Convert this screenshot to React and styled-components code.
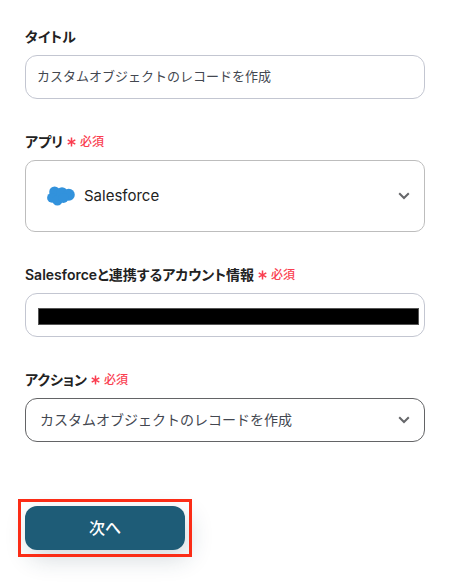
import React, { useState } from "react";
import styled, { createGlobalStyle } from "styled-components";

const GlobalStyle = createGlobalStyle`
  * {
    box-sizing: border-box;
  }

  body {
    margin: 0;
    background: #fff;
    color: #222;
    font-family: Inter, "Noto Sans CJK JP", sans-serif;
    font-size: 14px;
    line-height: 20px;
  }

  input, select, button {
    font: inherit;
    color: inherit;
  }
`;

const StyledForm = styled.form`
  display: flex;
  flex-direction: column;
  gap: 33px;
  padding: 27px 40px 36px 25px;
`;

const Field = styled.div`
  display: flex;
  flex-direction: column;
  gap: 8px;
`;

const StyledLabel = styled.label`
  display: flex;
  align-items: center;
  gap: 4px;
  font-weight: 600;
  font-feature-settings: "palt";
`;

const Required = styled.span`
  display: flex;
  align-items: center;
  gap: 4px;
  color: #fa3e50;
  font-size: 12px;
  font-weight: 500;
`;

const Box = styled.div`
  position: relative;
  display: flex;
  align-items: center;
  height: ${(props) => (props.$tall ? "72px" : "44px")};
  border: 1px solid ${(props) => props.$border || "#c3c6d1"};
  border-radius: ${(props) => (props.$tall ? "10px" : "12px")};
`;

const TextInput = styled.input`
  width: 100%;
  height: 100%;
  padding: 0 11px 4px;
  border: 0;
  outline: 0;
  background: transparent;
  color: #434750;
  font-size: 13px;
`;

// account name is blacked out
const MaskedInput = styled.input`
  flex: 1;
  min-width: 0;
  height: 17px;
  margin: 2px 5px 0 12px;
  padding: 0;
  border: 1px solid #555;
  outline: 0;
  background: #000;
`;

const StyledSelect = styled.select`
  appearance: none;
  width: 100%;
  height: 100%;
  padding: 0 40px 0 ${(props) => (props.$icon ? "58px" : "14px")};
  border: 0;
  outline: 0;
  background: transparent;
  color: ${(props) => (props.$icon ? "#222" : "#434750")};
  font-size: ${(props) => (props.$icon ? "15px" : "14px")};
`;

const ChevronIcon = styled.svg`
  position: absolute;
  right: 14px;
  width: 12px;
  height: 8px;
  pointer-events: none;
`;

const CloudIcon = styled.svg`
  position: absolute;
  left: 21px;
  width: 28px;
  height: 20px;
  pointer-events: none;
`;

const Actions = styled.div`
  display: flex;
  margin-top: 31px;
`;

const SubmitButton = styled.button`
  position: relative;
  width: 160px;
  height: 44px;
  border: 0;
  border-radius: 12px;
  background: #1e5c77;
  box-shadow: 4px 8px 24px rgba(30, 60, 80, 0.2);
  color: #fff;
  font-size: 16px;
  font-weight: 500;
  cursor: pointer;

  /* highlight frame */
  &:after {
    content: "";
    position: absolute;
    inset: -7px;
    border: 3px solid #fb2c16;
  }
`;

const Chevron = () => (
  <ChevronIcon viewBox="0 0 12 8" aria-hidden="true">
    <path d="M1.2 1.2 6 6l4.8-4.8" fill="none" stroke="#66676a" strokeWidth="2" />
  </ChevronIcon>
);

const Salesforce = () => (
  <CloudIcon viewBox="0 0 28 20" fill="#3292dc" aria-hidden="true">
    <circle cx="7.6" cy="5.9" r="5.4" />
    <circle cx="15" cy="6.8" r="5.6" />
    <circle cx="21.8" cy="8.8" r="6" />
    <circle cx="5" cy="11.8" r="4.9" />
    <circle cx="10.4" cy="14.3" r="5.2" />
    <circle cx="16.4" cy="12" r="5" />
  </CloudIcon>
);

const FieldLabel = ({ children, required, ...props }) => (
  <StyledLabel {...props}>
    {children}
    {required ? (
      <Required>
        <svg width="9" height="10" viewBox="0 0 9 10" aria-hidden="true">
          <path d="M4.5.5v9M.7 2.8l7.6 4.4M8.3 2.8.7 7.2" stroke="currentColor" strokeWidth="1.5" />
        </svg>
        必須
      </Required>
    ) : null}
  </StyledLabel>
);

const App = () => {
  const [title, setTitle] = useState("カスタムオブジェクトのレコードを作成");

  return (
    <>
      <GlobalStyle />
      <StyledForm onSubmit={(e) => e.preventDefault()}>
        <Field>
          <FieldLabel htmlFor="title">タイトル</FieldLabel>
          <Box>
            <TextInput
              id="title"
              type="text"
              value={title}
              onChange={(e) => setTitle(e.target.value)}
            />
          </Box>
        </Field>
        <Field>
          <FieldLabel htmlFor="app" required>アプリ</FieldLabel>
          <Box $tall $border="#bdbdbd">
            <Salesforce />
            <StyledSelect id="app" $icon>
              <option>Salesforce</option>
            </StyledSelect>
            <Chevron />
          </Box>
        </Field>
        <Field>
          <FieldLabel htmlFor="account" required>
            Salesforceと連携するアカウント情報
          </FieldLabel>
          <Box>
            <MaskedInput id="account" type="text" readOnly />
          </Box>
        </Field>
        <Field>
          <FieldLabel htmlFor="action" required>アクション</FieldLabel>
          <Box $border="#636466">
            <StyledSelect id="action">
              <option>カスタムオブジェクトのレコードを作成</option>
            </StyledSelect>
            <Chevron />
          </Box>
        </Field>
        <Actions>
          <SubmitButton type="submit">次へ</SubmitButton>
        </Actions>
      </StyledForm>
    </>
  );
};

export default App;
